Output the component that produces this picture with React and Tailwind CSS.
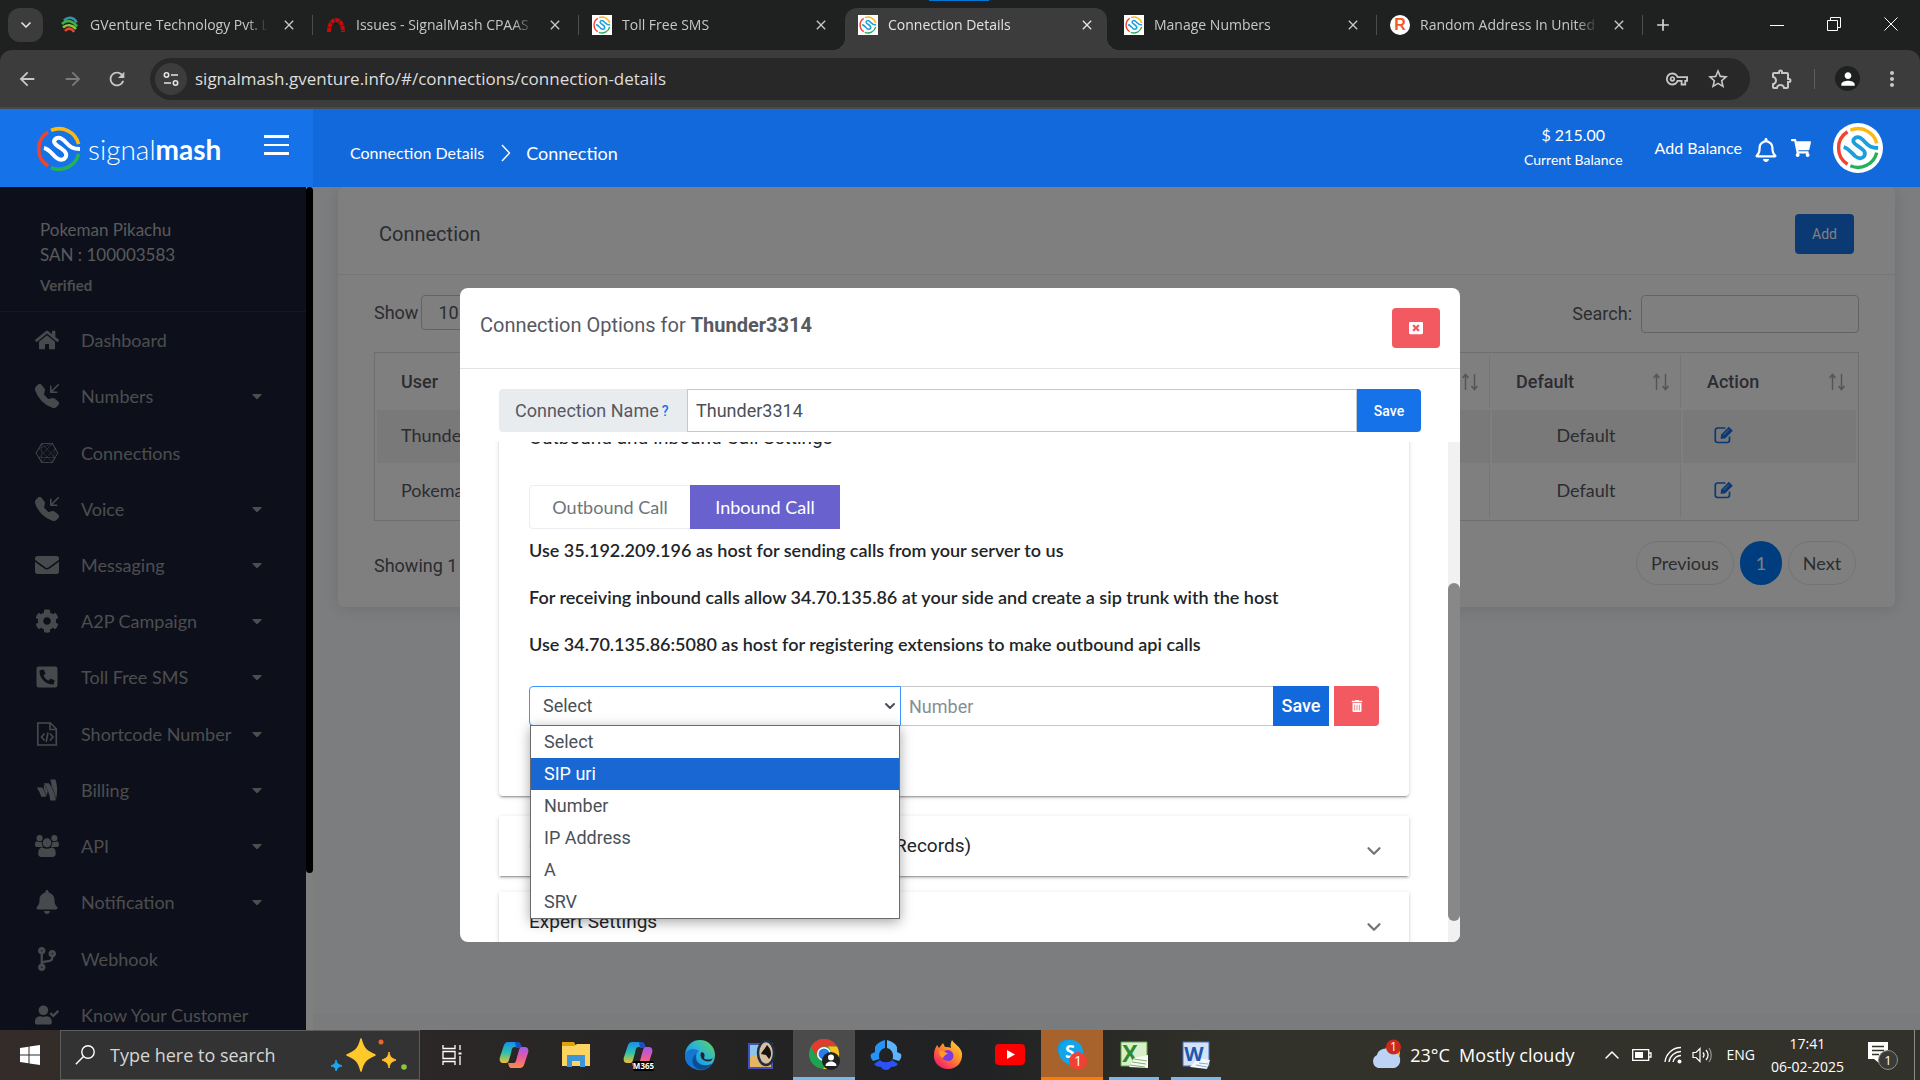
import {
  FaBell,
  FaCaretDown,
  FaCodeBranch,
  FaCog,
  FaConnectdevelop,
  FaEnvelope,
  FaGoogleWallet,
  FaHome,
  FaPhoneSquareAlt,
  FaRegBell,
  FaShoppingCart,
  FaTrashAlt,
  FaUserCheck,
  FaWindowClose,
} from "react-icons/fa";
import { BsTelephoneInboundFill } from "react-icons/bs";
import {
  MdAdd,
  MdArrowBack,
  MdArrowForward,
  MdClose,
  MdMoreVert,
  MdOutlineExtension,
  MdOutlineVpnKey,
  MdPerson,
  MdRefresh,
  MdStarBorder,
} from "react-icons/md";
import { ChevronDown, ChevronUp } from "lucide-react";

function FileCodeIcon({ className }) {
  return (
    <svg viewBox="0 0 24 24" className={className} fill="none" stroke="currentColor" strokeWidth="1.6">
      <path d="M2.8 1h12.5l6 6v16H2.8z" />
      <path d="M15 1v6.5h6.3" />
      <path d="M9.5 11.5 6.5 15l3 3.5M15 11.5l3 3.5-3 3.5M13 10.5 11.2 20" />
    </svg>
  );
}

function UsersIcon({ className }) {
  return (
    <svg viewBox="0 0 26 24" className={className} fill="currentColor">
      <circle cx="5" cy="3.500" r="3.300" />
      <circle cx="21" cy="3.500" r="3.300" />
      <path d="M0 11c0-3 1-4.500 2.500-4C4 8 6 8 7.300 7.300 7 10 7.500 11 9 13H2c-1.500 0-2-1-2-2ZM26 11c0-3-1-4.500-2.500-4C22 8 20 8 18.700 7.300 19 10 18.500 11 17 13h7c1.500 0 2-1 2-2Z" />
      <circle cx="13" cy="8.500" r="4.800" />
      <path d="M3.500 20.500c0-4.500 1.300-7 4.500-7 3 1.800 7 1.800 10 0 3.200 0 4.500 2.500 4.500 7 0 2-1.300 3.500-3.500 3.500H7c-2.200 0-3.500-1.500-3.500-3.500Z" />
    </svg>
  );
}

function EditIcon() {
  return (
    <svg viewBox="0 0 20 18" className="w-5 h-[18px]" fill="none" stroke="currentColor">
      <path d="M15.5 10.5v3.6a2.4 2.4 0 0 1-2.4 2.4H3.7a2.4 2.4 0 0 1-2.4-2.4V4.4A2.4 2.4 0 0 1 3.7 2h7.8" strokeWidth="1.7" />
      <path d="m6.500 12.800.7-4.300L14.900.8l3.900 3.900-7.700 7.700z" fill="currentColor" stroke="none" />
      <path d="m9.500 9 5.400-5.400" stroke="#fff" strokeOpacity=".7" strokeWidth=".9" />
    </svg>
  );
}

function Swirl({ className, wave }) {
  return (
    <svg viewBox="-23 -23 46 46" className={className} fill="none" strokeWidth="3.6">
      <path d="M-8 -18.6A20.2 20.2 0 0 1 19.6 -4.8" stroke="#fcb813" />
      <path d="M-11 -17A20.2 20.2 0 0 0 -11 17" stroke="#ee4432" />
      <path d="M19.6 4.8A20.2 20.2 0 0 1 -8 18.6" stroke="#27b05a" />
      <path
        d="M-15 -1C-10 0 -7 5 -3 8.5C0 11 4 12 6.5 8.5C9 4 5 1.5 0 -2C-5 -5 -6.500 -8 -3 -10.500C0 -12.500 4 -10 7 -6.500C11 -2 14 0 21 0"
        stroke={wave}
        strokeWidth="4"
      />
    </svg>
  );
}

function SwirlFavicon() {
  return (
    <span className="bg-white size-5 flex items-center justify-center">
      <Swirl className="size-[18px]" wave="#1ba0dc" />
    </span>
  );
}

function GVentureFavicon() {
  return (
    <svg viewBox="0 0 20 20" className="size-5" fill="none" strokeWidth="2.6">
      <path d="M4 5.500C9 .5 15 3 16.500 7.500" stroke="#3d8fa8" />
      <path d="M2 9C7 4 13 6 17 11.500" stroke="#3fae49" />
      <path d="M3 12.500C7 9 12 9.500 16 14" stroke="#8cc63f" />
      <path d="M5 16C8 12.500 12 13 14 17" stroke="#e8452c" />
    </svg>
  );
}

function RedmineFavicon() {
  return (
    <svg viewBox="0 0 20 20" className="size-5" fill="none" stroke="#c80a0a" strokeWidth="4">
      <path d="M3 17C3 9 6 5 10 5s7 4 7 12" strokeDasharray="4.200 .7" />
    </svg>
  );
}

function RFavicon() {
  return (
    <span className="size-5 rounded-full bg-white text-[#f1592a] font-bold text-base leading-5 text-center font-['Liberation_Sans',sans-serif]">
      R
    </span>
  );
}

const tabs = [
  { title: "GVenture Technology Pvt. Ltd", icon: <GVentureFavicon /> },
  { title: "Issues - SignalMash CPAAS", icon: <RedmineFavicon /> },
  { title: "Toll Free SMS", icon: <SwirlFavicon />, noLine: true },
  { title: "Connection Details", icon: <SwirlFavicon />, active: true },
  { title: "Manage Numbers", icon: <SwirlFavicon /> },
  { title: "Random Address In United States", icon: <RFavicon /> },
];

function BrowserTab({ tab }) {
  return (
    <div className={`relative w-[266px] h-[42px] pl-[13px] pr-4 pb-2 flex items-center shrink-0 ${tab.active ? "text-[#e3e3e3]" : "text-[#c7c7c7]"}`}>
      {tab.active && (
        <>
          <span className="absolute left-0 right-1 inset-y-0 rounded-t-xl bg-[#3c3c3c]" />
          <span className="absolute -left-3 bottom-0 size-3 bg-[radial-gradient(circle_at_0_0,transparent_12px,#3c3c3c_12px)]" />
          <span className="absolute -right-2 bottom-0 size-3 bg-[radial-gradient(circle_at_100%_0,transparent_12px,#3c3c3c_12px)]" />
        </>
      )}
      <span className="relative shrink-0 flex">{tab.icon}</span>
      <span className="relative ml-[10px] w-[178px] overflow-hidden whitespace-nowrap text-sm [mask-image:linear-gradient(to_right,#000_88%,transparent)]">
        {tab.title}
      </span>
      <button aria-label="Close tab" className="relative ml-auto">
        <MdClose className="size-4" />
      </button>
      {!tab.active && !tab.noLine && <span className="absolute right-0 top-[7px] h-5 w-px bg-[#4a4d4c]" />}
    </div>
  );
}

function Browser() {
  return (
    <div className="shrink-0 bg-[#1f2120] font-['Open_Sans',sans-serif]">
      <div className="relative flex h-[50px] pt-2">
        <span className="absolute left-[929px] top-0 w-[60px] h-px bg-[#0078d7]" />
        <button aria-label="Search tabs" className="ml-2 w-[35px] h-[34px] rounded-xl bg-[#3c3c3c] text-[#e3e3e3] flex items-center justify-center">
          <ChevronDown className="size-4" strokeWidth={2.5} />
        </button>
        <div className="flex ml-1">
          {tabs.map((tab) => (
            <BrowserTab key={tab.title} tab={tab} />
          ))}
        </div>
        <button aria-label="New tab" className="self-start mt-[7px] ml-[10px] text-[#d5d5d5]">
          <MdAdd className="size-5" />
        </button>
        <div className="ml-auto flex items-start pt-[9px] pr-[22px] gap-[43px] text-white">
          <button aria-label="Minimize" className="w-[14px] h-4 flex items-center">
            <span className="w-full h-px bg-white" />
          </button>
          <button aria-label="Restore">
            <svg viewBox="0 0 14 14" className="size-[14px]" fill="none" stroke="currentColor">
              <path d="M.5 3.500h10v10h-10zM3.500 3.500v-3h10v10h-3" />
            </svg>
          </button>
          <button aria-label="Close">
            <svg viewBox="0 0 14 14" className="size-[14px]" fill="none" stroke="currentColor">
              <path d="m.5.5 13 13M13.500.5l-13 13" />
            </svg>
          </button>
        </div>
      </div>

      <div className="h-[59px] bg-[#3c3c3c] rounded-t-xl border-b-2 border-[#4a4a4a] flex items-center pl-4 pr-4 text-[#c7c7c7]">
        <button aria-label="Back">
          <MdArrowBack className="size-[22px]" />
        </button>
        <button aria-label="Forward" className="ml-6 text-[#7b7b7b]">
          <MdArrowForward className="size-[22px]" />
        </button>
        <button aria-label="Reload" className="ml-[22px]">
          <MdRefresh className="size-[22px]" />
        </button>
        <div className="ml-[22px] flex-1 h-[42px] rounded-full bg-[#282828] flex items-center pl-[5px] pr-5">
          <span className="size-8 rounded-full bg-[#3c3c3c] flex items-center justify-center">
            <svg viewBox="0 0 16 16" className="size-4" fill="none" stroke="#e3e3e3" strokeWidth="1.600">
              <circle cx="3.500" cy="4" r="2.200" />
              <path d="M8 4h7M1 12h7" />
              <circle cx="12.500" cy="12" r="2.200" />
            </svg>
          </span>
          <input
            aria-label="Address"
            readOnly
            value="signalmash.gventure.info/#/connections/connection-details"
            className="ml-2 flex-1 text-[17px] text-[#dedede] bg-transparent outline-none"
          />
          <MdOutlineVpnKey className="size-[22px]" />
          <MdStarBorder className="size-6 ml-[18px]" />
        </div>
        <MdOutlineExtension className="size-6 ml-5" />
        <span className="w-px h-5 bg-[#5f5f5f] ml-5" />
        <span className="ml-5 size-[25px] rounded-full bg-[#1f2120] text-white flex items-center justify-center">
          <MdPerson className="size-5" />
        </span>
        <MdMoreVert className="size-6 ml-5" />
      </div>
    </div>
  );
}

function AppHeader() {
  return (
    <header className="shrink-0 h-[78px] flex text-white font-['Lato',sans-serif]">
      <div className="w-[313px] bg-[#1572e8] flex items-center pl-9 pr-6 pt-[2px]">
        <Swirl className="size-[46px]" wave="#fff" />
        <span className="ml-[6px] text-[28px] leading-8 font-light">
          signal<b className="font-bold">mash</b>
        </span>
        <button aria-label="Toggle menu" className="ml-auto mb-2 flex flex-col gap-[6px]">
          <span className="w-[25px] h-[3px] bg-white" />
          <span className="w-[25px] h-[2px] bg-white" />
          <span className="w-[25px] h-[3px] bg-white" />
        </button>
      </div>
      <div className="flex-1 bg-[#1269db] flex items-center pl-[37px] pr-[37px]">
        <nav className="flex items-center mt-[10px]">
          <a href="#details" className="text-base">Connection Details</a>
          <svg viewBox="0 0 10 18" className="w-[10px] h-[18px] ml-[17px] mr-[15px]" fill="none" stroke="currentColor" strokeWidth="1.400">
            <path d="m1 1 7.500 8L1 17" />
          </svg>
          <a href="#connection" className="text-lg leading-6">Connection</a>
        </nav>
        <div className="ml-auto mb-[2px] text-center">
          <p className="text-base leading-[26px]">$ 215.00</p>
          <p className="text-sm leading-6">Current Balance</p>
        </div>
        <a href="#balance" className="ml-8 text-base">Add Balance</a>
        <FaRegBell className="size-6 ml-3 mt-1" />
        <FaShoppingCart className="size-5 ml-[13px]" />
        <span className="ml-[22px] size-[50px] rounded-full bg-white flex items-center justify-center">
          <Swirl className="size-11" wave="#1ba0dc" />
        </span>
      </div>
    </header>
  );
}

const menu = [
  { label: "Dashboard", Icon: FaHome },
  { label: "Numbers", Icon: BsTelephoneInboundFill, sub: true },
  { label: "Connections", Icon: FaConnectdevelop },
  { label: "Voice", Icon: BsTelephoneInboundFill, sub: true },
  { label: "Messaging", Icon: FaEnvelope, sub: true },
  { label: "A2P Campaign", Icon: FaCog, sub: true },
  { label: "Toll Free SMS", Icon: FaPhoneSquareAlt, sub: true },
  { label: "Shortcode Number", Icon: FileCodeIcon, sub: true },
  { label: "Billing", Icon: FaGoogleWallet, sub: true },
  { label: "API", Icon: UsersIcon, sub: true },
  { label: "Notification", Icon: FaBell, sub: true },
  { label: "Webhook", Icon: FaCodeBranch },
  { label: "Know Your Customer", Icon: FaUserCheck },
];

function Sidebar() {
  return (
    <aside className="w-[313px] shrink-0 flex bg-white overflow-hidden font-['Lato',sans-serif]">
      <div className="w-[306px] bg-[#1a2035] text-[#989b9f]">
        <div className="h-[125px] pl-10 pt-[30px] border-b border-[#2b3044]">
          <p className="text-[17px] leading-[25px] text-[#b2b4b8]">Pokeman Pikachu</p>
          <p className="text-[17px] leading-[25px] text-[#b2b4b8]">SAN : 100003583</p>
          <p className="text-[15px] leading-9 font-bold">Verified</p>
        </div>
        <ul className="h-[731px] grid auto-rows-fr">
          {menu.map(({ label, Icon, sub }) => (
            <li key={label}>
              <a href={`#${label}`} className="h-full flex items-center pl-[34px] pr-[41px] text-lg">
                <Icon className="size-[26px] p-px text-[#8d9498]" />
                <span className="ml-[21px]">{label}</span>
                {sub && <FaCaretDown className="ml-auto size-4" />}
              </a>
            </li>
          ))}
        </ul>
      </div>
      <div className="w-[7px] h-[686px] rounded-full bg-black" />
    </aside>
  );
}

function SortIcon() {
  return (
    <svg viewBox="0 0 18 18" className="w-[18px] h-[18px]" fill="none" stroke="#a9aaae" strokeWidth="1.500">
      <path d="M4.500 17V2M1.500 5l3-3.500 3 3.500M13.500 1v15M10.500 13l3 3.500 3-3.500" />
    </svg>
  );
}

const rows = [{ user: "Thunder3314" }, { user: "Pokeman3315" }];

function ConnectionPage() {
  return (
    <main className="flex-1 min-w-0 flex flex-col bg-[#f9fbfd] font-['Roboto',sans-serif] text-[#575962]">
      <section className="ml-[25px] mr-[25px] bg-white rounded-md shadow-[0_2px_16px_0_rgba(60,70,90,.16)]">
        <div className="h-[88px] border-b border-[#ebecec] flex items-center pl-[41px] pr-[41px] pt-[6px]">
          <h1 className="text-xl">Connection</h1>
          <button className="ml-auto h-10 w-[59px] rounded bg-[#1572e8] text-white text-sm">Add</button>
        </div>
        <div className="px-9 pt-5 pb-[22px] text-lg">
          <div className="flex items-center h-[38px]">
            <label htmlFor="length" className="mb-[2px]">Show</label>
            <select id="length" className="ml-[3px] mb-[3px] w-24 h-[35px] border border-[#c4c6ca] rounded px-3 bg-white">
              <option>10</option>
            </select>
            <label htmlFor="search" className="ml-auto">Search:</label>
            <input id="search" className="ml-[9px] w-[218px] h-[38px] border border-[#c4c6ca] rounded" />
          </div>
          <table className="mt-[19px] w-full table-fixed border border-[#dcdde0] border-separate border-spacing-[2px] font-['Lato',sans-serif]">
            <colgroup>
              <col />
              <col />
              <col className="w-[189px]" />
              <col className="w-[173px]" />
            </colgroup>
            <thead>
              <tr className="text-left font-['Roboto',sans-serif]">
                <th className="h-[53px] px-6 font-medium border-r border-[#ebedf2]">User</th>
                <th className="border-r border-[#ebedf2] pr-[10px]">
                  <span className="flex justify-end"><SortIcon /></span>
                </th>
                <th className="border-r border-[#ebedf2] pl-6 pr-[10px] font-medium">
                  <span className="flex items-center justify-between">Default <SortIcon /></span>
                </th>
                <th className="pl-6 pr-[10px] font-medium">
                  <span className="flex items-center justify-between">Action <SortIcon /></span>
                </th>
              </tr>
            </thead>
            <tbody>
              {rows.map((row, i) => (
                <tr key={row.user} className={i % 2 === 0 ? "bg-[#f2f2f2]" : ""}>
                  <td className="h-[53px] px-6 pb-1">{row.user}</td>
                  <td className="border-r border-[#ebedf2]"></td>
                  <td className="border-r border-[#ebedf2] pb-1 text-center">Default</td>
                  <td className="pl-[31px] pb-1 text-[#1572e8]">
                    <button aria-label="Edit" className="block"><EditIcon /></button>
                  </td>
                </tr>
              ))}
            </tbody>
          </table>
          <div className="mt-[20px] h-11 flex items-center">
            <p className="pt-[6px]">Showing 1 to 2 of 2 entries</p>
            <div className="ml-auto mr-[3px] flex gap-[6px] font-['Lato',sans-serif]">
              <button className="h-11 w-[98px] rounded-full border border-[#e6e7ea]">Previous</button>
              <button className="h-11 w-[42px] rounded-full bg-[#007bff] text-white">1</button>
              <button className="h-11 w-[68px] rounded-full border border-[#e6e7ea]">Next</button>
            </div>
          </div>
        </div>
      </section>
      <footer className="mt-auto h-4 bg-[#f4f6fb]" />
    </main>
  );
}

const destinations = ["Select", "SIP uri", "Number", "IP Address", "A", "SRV"];

function DestinationRow() {
  return (
    <div className="flex h-10 text-lg text-[#495057]">
      <div className="relative flex-1">
        <select
          aria-label="Destination type"
          className="appearance-none w-full h-full pl-[13px] pr-8 rounded-l border border-[#3e93ff] bg-white outline-none"
        >
          {destinations.map((d) => (
            <option key={d}>{d}</option>
          ))}
        </select>
        <ChevronDown className="absolute right-[3px] top-3 size-4 pointer-events-none" strokeWidth={3} />
        <ul className="absolute z-10 left-px right-px top-[39px] bg-white border border-[#6b6b6b] shadow-[0_3px_12px_rgba(0,0,0,.35)]">
          {destinations.map((d) => (
            <li
              key={d}
              className={`h-8 pl-[13px] leading-8 ${d === "SIP uri" ? "bg-[#1967d2] text-white" : ""}`}
            >
              {d}
            </li>
          ))}
        </ul>
      </div>
      <div className="flex-1">
        <input
          aria-label="Number"
          placeholder="Number"
          className="w-full h-full px-2 border-y border-[#c4c6ca] outline-none placeholder:text-[#868e96]"
        />
      </div>
      <button className="w-[56px] bg-[#1269db] text-white font-medium">Save</button>
      <button aria-label="Delete" className="ml-[5px] w-[45px] rounded-r bg-[#f25961] text-white flex items-center justify-center">
        <FaTrashAlt className="size-3" />
      </button>
    </div>
  );
}

const cardShadow = "shadow-[0_3px_1px_-2px_rgba(0,0,0,.2),0_2px_2px_0_rgba(0,0,0,.14),0_1px_5px_0_rgba(0,0,0,.12)]";

function Panel({ title }) {
  return (
    <div className={`h-[60px] pl-[30px] pr-6 flex items-center justify-between ${cardShadow}`}>
      <h3 className="text-[19px]">{title}</h3>
      <ChevronDown className="size-[22px] mt-[10px] text-[#757575]" strokeWidth={2.5} />
    </div>
  );
}

function ConnectionModal() {
  return (
    <div className="absolute inset-0 bg-black/50 flex justify-center items-start pt-[101px]">
      <div role="dialog" className="w-[1000px] bg-white rounded-lg overflow-hidden font-['Roboto',sans-serif] text-[#575962]">
        <div className="h-[81px] border-b border-[#e2e3e5] flex items-center pl-5 pr-5">
          <h2 className="text-xl mb-[6px]">
            Connection Options for <b className="font-bold">Thunder3314</b>
          </h2>
          <button aria-label="Close" className="ml-auto w-12 h-10 rounded bg-[#f25961] text-white flex items-center justify-center">
            <FaWindowClose className="size-[14px]" />
          </button>
        </div>

        <div className="mt-5 ml-[39px] mr-[39px] h-[43px] flex text-lg">
          <label htmlFor="name" className="w-[188px] rounded-l bg-[#e9ecef] flex items-center pl-4">
            Connection Name <a href="#help" className="ml-[3px] text-sm font-medium text-[#1572e8]">?</a>
          </label>
          <input id="name" defaultValue="Thunder3314" className="flex-1 px-2 border border-[#c4c6ca] text-[#495057] outline-none" />
          <button className="w-16 rounded-r bg-[#1572e8] text-white text-sm font-medium">Save</button>
        </div>

        <div className="mt-[10px] h-[500px] flex">
          <div className="flex-1 h-full overflow-hidden pl-[39px] pr-[39px] text-lg text-[#212529]">
            <div className={`-mt-4 h-[370px] px-[30px] rounded-b ${cardShadow}`}>
              <h3 className="text-[19px] leading-6">Outbound and Inbound Call Settings</h3>
              <div className="mt-[35px] flex h-11 font-['Lato',sans-serif]">
                <button className="w-[161px] rounded-l border border-r-0 border-[#ebedf2] text-[#6c757d]">Outbound Call</button>
                <button className="w-[150px] bg-[#6861ce] text-white">Inbound Call</button>
              </div>
              <div className="font-['Lato',sans-serif] font-semibold leading-[27px] flex flex-col gap-5 pt-2">
                <p>Use 35.192.209.196 as host for sending calls from your server to us</p>
                <p>For receiving inbound calls allow 34.70.135.86 at your side and create a sip trunk with the host</p>
                <p>Use 34.70.135.86:5080 as host for registering extensions to make outbound api calls</p>
              </div>
              <div className="mt-7">
                <DestinationRow />
              </div>
            </div>
            <div className="mt-5">
              <Panel title="Call Routing and Caller Settings (Call Detail Records)" />
            </div>
            <div className="mt-4">
              <Panel title="Expert Settings" />
            </div>
          </div>
          <div className="w-3 bg-[#f1f1f1] pt-[141px]">
            <div className="h-[338px] rounded-full bg-[#888]" />
          </div>
        </div>
      </div>
    </div>
  );
}

function Copilot({ badge }) {
  return (
    <svg viewBox="0 0 32 32" className="size-8">
      <defs>
        <linearGradient id="cpA" x1="0" y1="0" x2="0" y2="1">
          <stop offset="0" stopColor="#1a8fe8" />
          <stop offset=".5" stopColor="#2bc0b0" />
          <stop offset="1" stopColor="#f0c22b" />
        </linearGradient>
        <linearGradient id="cpB" x1="0" y1="0" x2="0" y2="1">
          <stop offset="0" stopColor="#a05af0" />
          <stop offset=".5" stopColor="#ea5a9b" />
          <stop offset="1" stopColor="#fa8c4b" />
        </linearGradient>
      </defs>
      <path d="M10 3h8c3 0 3 2 4 5h-5c-3 0-3 2-4 6l-2 7c-1 3-2 3-4 3H5c-3 0-4-3-3-6l4-12c1-2 2-3 4-3Z" fill="url(#cpA)" />
      <path d="M17 3h3c2 0 3 2 4 6h-6z" fill="#1b50c4" />
      <path d="M22 29h-8c-3 0-3-2-4-5h5c3 0 3-2 4-6l2-7c1-3 2-3 4-3h2c3 0 4 3 3 6l-4 12c-1 2-2 3-4 3Z" fill="url(#cpB)" />
      {badge && (
        <>
          <rect x="11" y="22" width="21" height="10" rx="2" fill="#000" />
          <text x="21.500" y="30" fontSize="8" fontWeight="700" textAnchor="middle" fill="#fff" fontFamily="Open Sans, sans-serif">M365</text>
        </>
      )}
    </svg>
  );
}

function FolderIcon() {
  return (
    <svg viewBox="0 0 32 32" className="size-8">
      <path d="M2 3h12l2 4h14v20H2z" fill="#e2a20c" />
      <path d="M2 7h12l3-2h13v22H2z" fill="#fcd462" />
      <path d="M7 16h18v12h-5v-6h-8v6H7z" fill="#3d94d9" />
    </svg>
  );
}

function EdgeIcon() {
  return (
    <svg viewBox="0 0 32 32" className="size-8">
      <defs>
        <linearGradient id="edge" x1="0" y1="1" x2="1" y2="0">
          <stop offset="0" stopColor="#1378cf" />
          <stop offset=".55" stopColor="#2bb3d8" />
          <stop offset="1" stopColor="#62d84e" />
        </linearGradient>
      </defs>
      <circle cx="16" cy="16" r="15" fill="url(#edge)" />
      <path d="M1 17C2 10 10 8 15 12c-5 4-3 12 4 14 4 1 7 0 10-2-4 6-11 9-17 6C5 28 1 24 1 17Z" fill="#1677d2" />
      <path d="M12 15c-2 8 4 14 16 10-3 4-9 7-14 5-7-3-7-12-2-15Z" fill="#0b4d92" />
      <path d="M18 13c3 1 3 4 2 6 1 2 6 2 9 0l-2 3c-3 1-7 0-9-2-2-3-2-6 0-7Z" fill="#222527" />
    </svg>
  );
}

function PictureIcon() {
  return (
    <svg viewBox="0 0 32 32" className="size-8">
      <rect x="2" y="4" width="25" height="26" fill="#4451b3" />
      <rect x="4" y="6" width="21" height="22" fill="#8cc5e8" />
      <path d="M4 18c7-4 12 3 21 0v10H4z" fill="#e5b566" />
      <ellipse cx="20" cy="14" rx="8" ry="12" fill="#d9bfa0" stroke="#1c3145" strokeWidth="2.500" />
      <path d="M21 6c-2 4-5 6-6 9l5 1 3 4c3-3 3-9-2-14Z" fill="#171310" />
    </svg>
  );
}

function ChromeIcon() {
  return (
    <svg viewBox="0 0 32 32" className="size-8">
      <circle cx="16" cy="16" r="15" fill="#1fa350" />
      <path d="M3 8.500A15 15 0 0 1 29 8.500H16a8 8 0 0 0-6.500 12z" fill="#e33b2e" />
      <path d="M29 8.500A15 15 0 0 1 15 31l8-11c1-4 0-8-3-11.500z" fill="#fcc31e" />
      <circle cx="16" cy="16" r="7" fill="#fff" />
      <circle cx="16" cy="16" r="5.500" fill="#2b7de9" />
      <circle cx="23" cy="23" r="9" fill="#202124" />
      <circle cx="23" cy="19.500" r="3" fill="#fff" />
      <path d="M17.500 28c0-6 11-6 11 0z" fill="#fff" />
    </svg>
  );
}

function HexIcon() {
  return (
    <svg viewBox="0 0 32 32" className="size-8">
      <path d="M15 1v8c-4 1-6 4-6 8 0 1 0 2 .5 3L3 22c-2-2-3-5-2-7l4-2V8c2-4 6-6 10-7Z" fill="#2493f5" />
      <path d="M17 1v8c4 1 6 4 6 8 0 1 0 2-.5 3l6.500 2c2-2 3-5 2-7l-4-2V8c-2-4-6-6-10-7Z" fill="#5bb4fb" />
      <path d="M10 21c2 3 10 3 12 0l6 4c-1 2-4 3-7 3-2 4-8 4-10 0-3 0-6-1-7-3z" fill="#2b52f5" />
    </svg>
  );
}

function FirefoxIcon() {
  return (
    <svg viewBox="0 0 32 32" className="size-8">
      <defs>
        <linearGradient id="ff" x1="1" y1="0" x2=".2" y2="1">
          <stop offset="0" stopColor="#ffe13a" />
          <stop offset=".5" stopColor="#ff8a2b" />
          <stop offset="1" stopColor="#f5156c" />
        </linearGradient>
      </defs>
      <path d="M20 1c2 4 8 6 10 13 1 9-5 16-14 16S1 23 2 15c0-4 2-7 3-9l2 3 4-5 2 4c2 0 5 0 6 1-1-3 0-6 1-8Z" fill="url(#ff)" />
      <path d="M10 15c2-4 6-5 9-3 4 3 3 9-2 10-5 0-8-3-7-7Z" fill="#7a3be0" />
      <path d="M7 12c3-1 6 0 9 3-2 0-4 2-5 4-3-1-4-4-4-7Z" fill="#ff9d1e" />
    </svg>
  );
}

function YoutubeIcon() {
  return (
    <svg viewBox="0 0 32 32" className="size-8">
      <rect x="1" y="5" width="30" height="21" rx="4" fill="#f00" />
      <path d="m13 11 8 4.500-8 4.500z" fill="#fff" />
    </svg>
  );
}

function SkypeIcon() {
  return (
    <svg viewBox="0 0 32 32" className="size-8">
      <circle cx="11" cy="11" r="9.500" fill="#0a9be3" />
      <circle cx="18" cy="18" r="10.500" fill="#0a9be3" />
      <circle cx="15" cy="14" r="12" fill="#12a5ea" />
      <text x="14" y="20" fontSize="18" fontWeight="700" textAnchor="middle" fill="#fff" fontFamily="Open Sans, sans-serif">S</text>
      <circle cx="22" cy="23" r="9" fill="#ef4136" />
      <text x="22" y="28" fontSize="14" textAnchor="middle" fill="#fff" fontFamily="Open Sans, sans-serif">1</text>
    </svg>
  );
}

function ExcelIcon() {
  return (
    <svg viewBox="0 0 32 32" className="size-8">
      <path d="M3 3h26v24H3z" fill="#d8efc9" stroke="#5ea446" />
      <text x="12" y="23" fontSize="23" fontWeight="700" textAnchor="middle" fill="#2d8a33" fontFamily="Open Sans, sans-serif">X</text>
      <path d="m16 19 14-3v13l-19-1z" fill="#f8fbf5" />
      <path d="m16 20 13 2M14 23l14 2M12 26l15 2" stroke="#7cb56c" />
    </svg>
  );
}

function WordIcon() {
  return (
    <svg viewBox="0 0 32 32" className="size-8">
      <path d="M3 3h26v24H3z" fill="#d3e2f6" stroke="#4470bd" />
      <path d="m18 19 12 2-3 9-17-2z" fill="#f5f8fd" />
      <path d="m19 24 9 1M16 26l11 2" stroke="#8aa9d8" />
      <text x="14" y="22" fontSize="20" fontWeight="700" textAnchor="middle" fill="#1f56b0" fontFamily="Open Sans, sans-serif">W</text>
    </svg>
  );
}

const apps = [
  { name: "Copilot", icon: <Copilot /> },
  { name: "Explorer", icon: <FolderIcon /> },
  { name: "M365", icon: <Copilot badge /> },
  { name: "Edge", icon: <EdgeIcon /> },
  { name: "Pictures", icon: <PictureIcon /> },
  { name: "Chrome", icon: <ChromeIcon />, cls: "bg-[#4b4b4b] border-b-[3px] border-[#76b9ed]" },
  { name: "Flow", icon: <HexIcon /> },
  { name: "Firefox", icon: <FirefoxIcon /> },
  { name: "YouTube", icon: <YoutubeIcon /> },
  { name: "Skype", icon: <SkypeIcon />, cls: "bg-[#a8622b] border-b-[3px] border-[#ff7a00]" },
  { name: "Excel", icon: <ExcelIcon />, line: true },
  { name: "Word", icon: <WordIcon />, line: true },
];

function Taskbar() {
  return (
    <footer className="shrink-0 h-[50px] flex bg-linear-to-r from-[#342c29] via-[#202123] via-50% to-[#33322a] to-65% text-white font-['Open_Sans',sans-serif]">
      <button aria-label="Start" className="w-[60px] flex items-center justify-center">
        <svg viewBox="0 0 20 20" className="size-5" fill="currentColor">
          <path d="M0 3l8.500-1.300v7.800H0zM9.500 1.500 20 0v9.500H9.500zM0 10.500h8.500v7.800L0 17zM9.500 10.500H20V20L9.500 18.500z" />
        </svg>
      </button>
      <div className="w-[360px] border border-[#5c5c5c] bg-[#333] flex items-center pl-[14px] pr-[12px]">
        <svg viewBox="0 0 20 20" className="size-5" fill="none" stroke="#fff" strokeWidth="1.400">
          <circle cx="13" cy="7" r="6.200" />
          <path d="M8.500 11.500.8 19.300" />
        </svg>
        <input
          aria-label="Search"
          placeholder="Type here to search"
          className="ml-[15px] flex-1 min-w-0 text-lg bg-transparent outline-none placeholder:text-[#d6d6d6]"
        />
        <svg viewBox="0 0 76 34" className="w-[76px] h-[38px]">
          <path d="M30 1c2 8 4 12 14 16-10 4-12 8-14 16-2-8-4-12-14-16C26 13 28 9 30 1Z" fill="#ffc82b" stroke="#ffc82b" strokeWidth="1.500" strokeLinejoin="round" />
          <path d="M58 14c1 5 2 6 7 8-5 2-6 3-7 8-1-5-2-6-7-8 5-2 6-3 7-8Z" fill="#ffc02b" stroke="#ffc02b" strokeLinejoin="round" />
          <path d="M5 22c1 4 2 4 6 6-4 1-4 1-6 5-1-4-1-4-5-5 4-2 4-2 5-6Z" fill="#19a7ee" stroke="#19a7ee" />
          <circle cx="50" cy="4" r="2.500" fill="#f0642b" />
          <circle cx="73" cy="29" r="2.800" fill="#8bc63f" />
        </svg>
      </div>
      <button aria-label="Task view" className="w-[63px] flex items-center justify-center">
        <svg viewBox="0 0 20 20" className="size-5" fill="none" stroke="#fff" strokeWidth="1.300">
          <path d="M1 0v3.500h12V0M1 6.500h12v7H1zM1 20v-3.500h12V20M18 0v5M18 11v9" />
          <path d="M16.500 7.500h3v2h-3z" fill="#fff" stroke="none" />
        </svg>
      </button>
      {apps.map((app) => (
        <button key={app.name} aria-label={app.name} className={`relative w-[62px] flex items-center justify-center ${app.cls || ""}`}>
          {app.icon}
          {app.line && <span className="absolute inset-x-[6px] bottom-0 h-[3px] bg-[#76b9ed]" />}
        </button>
      ))}

      <div className="ml-auto flex items-center">
        <svg viewBox="0 0 32 32" className="size-8">
          <circle cx="22" cy="14" r="8" fill="#f5a623" />
          <path d="M8 29a7 7 0 0 1-1-13c1-7 12-9 15-2 6-1 9 4 8 9-1 4-4 6-7 6z" fill="#bcd3f5" />
          <circle cx="23.500" cy="8" r="7.500" fill="#c62b1c" />
          <text x="23.500" y="12" fontSize="12" textAnchor="middle" fill="#fff" fontFamily="Open Sans, sans-serif">1</text>
        </svg>
        <span className="ml-2 text-lg whitespace-pre">23°C  Mostly cloudy</span>
        <ChevronUp className="size-6 ml-[26px]" strokeWidth={1.5} />
        <svg viewBox="0 0 20 12" className="ml-2 w-5 h-3" fill="none" stroke="#fff">
          <path d="M.7.700h16v10.600H.7zM17 4h2v4h-2" strokeWidth="1.300" />
          <path d="M3 3h8v6H3z" fill="#fff" stroke="none" />
        </svg>
        <svg viewBox="0 0 18 18" className="ml-3 size-[18px]" fill="none" stroke="#fff" strokeWidth="1.300">
          <path d="M1 16A16 16 0 0 1 17 1.500M5 16A12 12 0 0 1 17 5.500M9 16a8 8 0 0 1 8-6.500" />
          <circle cx="15.500" cy="15.500" r="2" fill="#fff" stroke="none" />
        </svg>
        <svg viewBox="0 0 20 18" className="ml-[10px] w-5 h-[18px]" fill="none" stroke="#fff" strokeWidth="1.200">
          <path d="M1 6.500h3l4-4v13l-4-4H1zM11 6.500c1.300 1.500 1.300 3.500 0 5M14 4c2.500 3 2.500 7 0 10" />
          <path d="M17 2c3 4 3 10 0 14" opacity=".5" />
        </svg>
        <span className="ml-[14px] text-sm">ENG</span>
        <div className="ml-4 text-center text-sm leading-[23px]">
          <p>17:41</p>
          <p>06-02-2025</p>
        </div>
        <div className="relative ml-6 size-[30px]">
          <svg viewBox="0 0 30 30" className="size-[30px]">
            <path d="M0 2h20v17h-9v4l-5-4H0z" fill="#fff" />
            <path d="M4 6.500h12M4 10.500h12M4 14.500h7" stroke="#33322a" strokeWidth="1.300" />
            <circle cx="20" cy="20" r="9.500" fill="#3a3a38" stroke="#8b8b88" />
            <text x="20" y="25" fontSize="13" textAnchor="middle" fill="#fff" fontFamily="Open Sans, sans-serif">1</text>
          </svg>
        </div>
        <span className="ml-4 mr-[5px] w-px h-[50px] bg-[#8b8b88]" />
      </div>
    </footer>
  );
}

export default function App() {
  return (
    <div className="h-screen overflow-hidden flex flex-col">
      <Browser />
      <AppHeader />
      <div className="relative flex-1 min-h-0 flex overflow-hidden">
        <Sidebar />
        <ConnectionPage />
        <ConnectionModal />
      </div>
      <Taskbar />
    </div>
  );
}
